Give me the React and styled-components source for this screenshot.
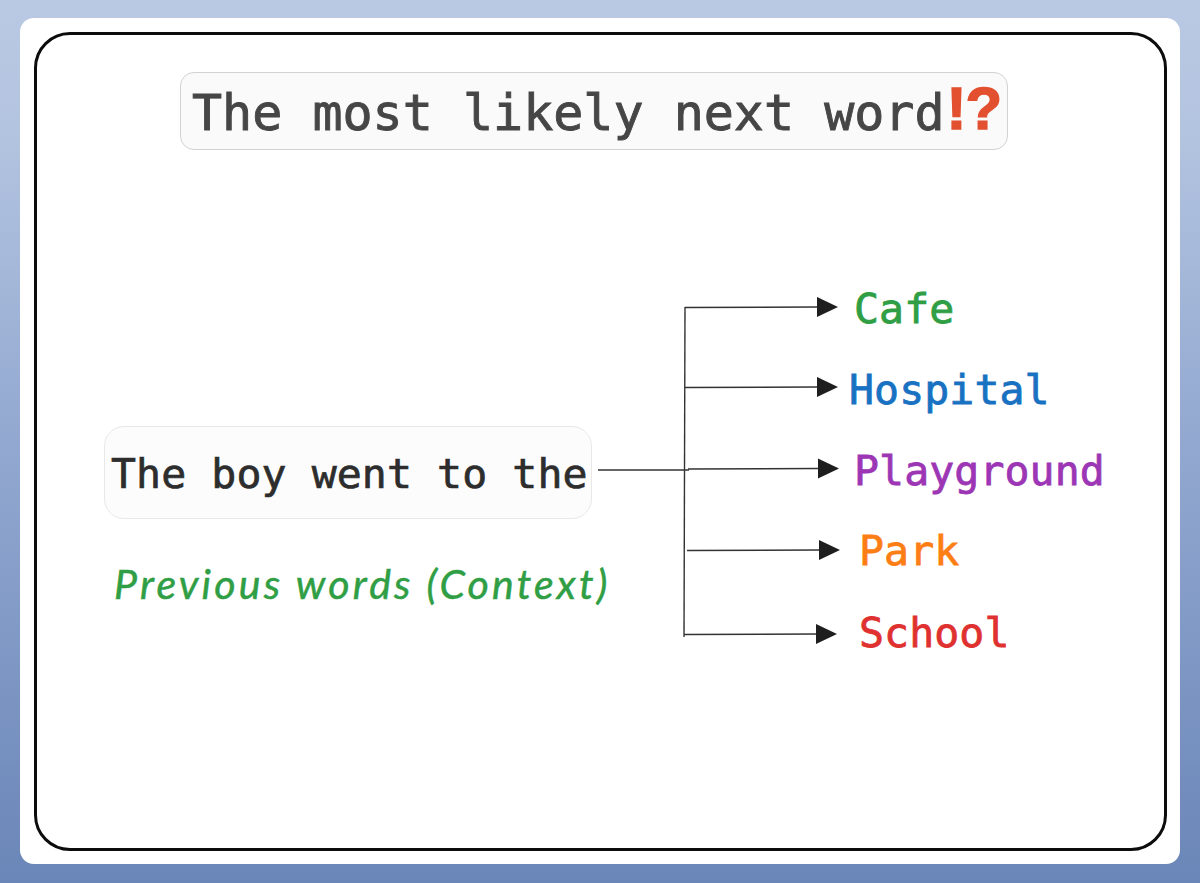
import React from "react";
import styled, { createGlobalStyle } from "styled-components";

const Global = createGlobalStyle`
  html, body { margin: 0; padding: 0; }
  body { background: #6a86b8; }
`;

const Page = styled.div`
  box-sizing: border-box;
  width: 1200px;
  height: 883px;
  padding: 18px 20px 19px;
  background: linear-gradient(180deg, #b9c9e3 0%, #b3c4e0 15%, #92a8d0 50%, #6a86b8 100%);
  overflow: hidden;
`;

const Card = styled.div`
  box-sizing: border-box;
  height: 100%;
  padding: 14px 13px 13px 14px;
  background: #ffffff;
  border-radius: 14px;
`;

const Frame = styled.div`
  box-sizing: border-box;
  height: 100%;
  display: flex;
  flex-direction: column;
  align-items: center;
  padding-top: 37px;
  border: 3px solid #0c0c0c;
  border-radius: 36px;
`;

const Title = styled.h1`
  box-sizing: border-box;
  width: 828px;
  height: 78px;
  margin: 0 0 0 -13px;
  padding: 3px 0 0 11px;
  display: flex;
  align-items: center;
  background: #fafafa;
  border: 1.5px solid #d2d2d2;
  border-radius: 14px;
  font: 400 50px/1 "DejaVu Sans Mono", monospace;
  -webkit-text-stroke: 0.9px #464646;
  color: #464646;
  white-space: nowrap;
`;

const Alarm = styled.span`
  margin: -7px 0 0 2px;
  font: 700 60px/1 "Liberation Sans Narrow", "Liberation Sans", sans-serif;
  letter-spacing: -1px;
  -webkit-text-stroke: 1.5px #e2502f;
  color: #e2502f;
`;

const Canvas = styled.div`
  position: relative;
  flex: 1;
  align-self: stretch;
`;

/* origin of the canvas in page coordinates: x 37, y 150 */
const Lines = styled.svg`
  position: absolute;
  left: -37px;
  top: -150px;
  width: 1200px;
  height: 883px;
  pointer-events: none;
`;

const Sentence = styled.div`
  position: absolute;
  left: 67px;
  top: 276px;
  box-sizing: border-box;
  width: 488px;
  height: 93px;
  padding: 3px 0 0 6px;
  display: flex;
  align-items: center;
  background: #fcfcfc;
  border: 1.5px solid #e8e8e8;
  border-radius: 20px;
  font: 400 41.5px/1 "DejaVu Sans Mono", monospace;
  letter-spacing: 0.1px;
  -webkit-text-stroke: 0.7px #2d2d2d;
  color: #2d2d2d;
  white-space: nowrap;
`;

const Note = styled.div`
  position: absolute;
  left: 77px;
  top: 410px;
  font: italic 400 41px/48px "Lato", sans-serif;
  letter-spacing: 3.2px;
  -webkit-text-stroke: 0.5px #2f9e44;
  color: #2f9e44;
  white-space: nowrap;
`;

const Word = styled.div`
  position: absolute;
  left: ${(p) => p.$left - 37}px;
  top: ${(p) => p.$top - 150}px;
  font: 400 41.5px/50px "DejaVu Sans Mono", monospace;
  letter-spacing: 0.1px;
  -webkit-text-stroke: 0.8px ${(p) => p.$color};
  color: ${(p) => p.$color};
  white-space: nowrap;
`;

const words = [
  { text: "Cafe", left: 854, top: 284, color: "#2f9e44" },
  { text: "Hospital", left: 849, top: 365, color: "#1971c2" },
  { text: "Playground", left: 854, top: 446, color: "#9c36b5" },
  { text: "Park", left: 859, top: 526, color: "#fd7e14" },
  { text: "School", left: 859, top: 608, color: "#e03131" },
];

const arrows = [
  { x1: 685, y1: 307.5, x2: 818, y2: 307, tip: 838 },
  { x1: 685, y1: 387.5, x2: 818, y2: 387, tip: 838 },
  { x1: 688, y1: 469, x2: 819, y2: 468.5, tip: 839 },
  { x1: 687, y1: 550.5, x2: 820, y2: 550, tip: 840 },
  { x1: 684, y1: 634.5, x2: 817, y2: 634, tip: 837 },
];

export default function App() {
  return (
    <>
      <Global />
      <Page>
        <Card>
          <Frame>
            <Title>
              The most likely next word<Alarm>!?</Alarm>
            </Title>
            <Canvas>
              <Lines viewBox="0 0 1200 883">
                <g stroke="#333" strokeWidth="1.4" fill="none">
                  <path d="M685 307 L684 637" />
                  <path d="M598 470 L689 470" />
                  {arrows.map((a) => (
                    <path key={a.y1} d={`M${a.x1} ${a.y1} L${a.x2} ${a.y2}`} />
                  ))}
                </g>
                <g fill="#1e1e1e">
                  {arrows.map((a) => (
                    <path
                      key={a.y1}
                      d={`M${a.tip - 21} ${a.y2 - 10} L${a.tip} ${a.y2} L${a.tip - 21} ${a.y2 + 10} Z`}
                    />
                  ))}
                </g>
              </Lines>
              <Sentence>The boy went to the</Sentence>
              <Note>Previous words (Context)</Note>
              {words.map((w) => (
                <Word key={w.text} $left={w.left} $top={w.top} $color={w.color}>
                  {w.text}
                </Word>
              ))}
            </Canvas>
          </Frame>
        </Card>
      </Page>
    </>
  );
}
